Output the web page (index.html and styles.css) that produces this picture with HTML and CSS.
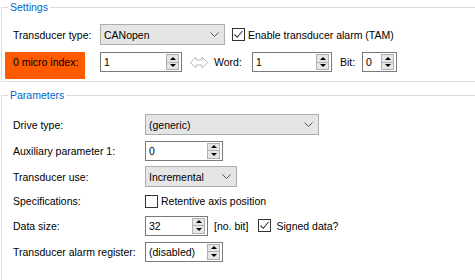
FILE: index.html
```html
<!DOCTYPE html>
<html>
<head>
<meta charset="utf-8">
<title>Transducer settings</title>
<link rel="stylesheet" href="styles.css">
</head>
<body>
<fieldset class="group settings">
  <legend>Settings</legend>
  <div class="row row-type">
    <span class="lbl-type">Transducer type:</span>
    <div class="combo w-can"><span class="combo-val">CANopen</span><svg class="chev" width="9" height="5" viewBox="0 0 9 5"><polyline points="0.5,0.5 4.5,4.5 8.5,0.5" fill="none" stroke="#555" stroke-width="1"/></svg></div>
    <span class="check chk-tam"><span class="box"><svg width="11" height="11" viewBox="0 0 11 11"><polyline points="1.5,5.5 4.2,8.3 9.5,2" fill="none" stroke="#333" stroke-width="1.1"/></svg></span><span class="check-txt">Enable transducer alarm (TAM)</span></span>
  </div>
  <div class="row row-index">
    <span class="alert">0 micro index:</span>
    <div class="spin w-idx"><span class="spin-val">1</span><span class="spin-btns"><span class="up"></span><span class="down"></span></span></div>
    <svg class="link" width="18" height="13" viewBox="0 0 18 13"><polygon points="0.5,6.5 6,1 6,4 12,4 12,1 17.5,6.5 12,12 12,9 6,9 6,12" fill="#fff" stroke="#b9b9b9" stroke-width="1" stroke-linejoin="miter"/></svg>
    <span class="txt t-word">Word:</span>
    <div class="spin w-word"><span class="spin-val">1</span><span class="spin-btns"><span class="up"></span><span class="down"></span></span></div>
    <span class="txt t-bit">Bit:</span>
    <div class="spin w-bit"><span class="spin-val">0</span><span class="spin-btns"><span class="up"></span><span class="down"></span></span></div>
  </div>
</fieldset>
<fieldset class="group params">
  <legend>Parameters</legend>
  <div class="form">
    <span class="lbl">Drive type:</span>
    <div class="cell"><div class="combo w-drive"><span class="combo-val">(generic)</span><svg class="chev" width="9" height="5" viewBox="0 0 9 5"><polyline points="0.5,0.5 4.5,4.5 8.5,0.5" fill="none" stroke="#555" stroke-width="1"/></svg></div></div>

    <span class="lbl">Auxiliary parameter 1:</span>
    <div class="cell"><div class="spin w-aux"><span class="spin-val">0</span><span class="spin-btns"><span class="up"></span><span class="down"></span></span></div></div>

    <span class="lbl">Transducer use:</span>
    <div class="cell"><div class="combo w-use"><span class="combo-val">Incremental</span><svg class="chev" width="9" height="5" viewBox="0 0 9 5"><polyline points="0.5,0.5 4.5,4.5 8.5,0.5" fill="none" stroke="#555" stroke-width="1"/></svg></div></div>

    <span class="lbl">Specifications:</span>
    <div class="cell"><span class="check"><span class="box"></span><span class="check-txt">Retentive axis position</span></span></div>

    <span class="lbl">Data size:</span>
    <div class="cell">
      <div class="spin w-size"><span class="spin-val">32</span><span class="spin-btns"><span class="up"></span><span class="down"></span></span></div>
      <span class="txt t-unit">[no. bit]</span>
      <span class="check chk-signed"><span class="box"><svg width="11" height="11" viewBox="0 0 11 11"><polyline points="1.5,5.5 4.2,8.3 9.5,2" fill="none" stroke="#333" stroke-width="1.1"/></svg></span><span class="check-txt">Signed data?</span></span>
    </div>

    <span class="lbl">Transducer alarm register:</span>
    <div class="cell"><div class="spin w-alarm"><span class="spin-val">(disabled)</span><span class="spin-btns"><span class="up"></span><span class="down"></span></span></div></div>
  </div>
</fieldset>
</body>
</html>
```

FILE: styles.css
```css
html, body {
  margin: 0;
  padding: 0;
  background: #fff;
}
body {
  width: 475px;
  height: 280px;
  overflow: hidden;
  font-family: "Liberation Sans", Arial, sans-serif;
  font-size: 10.5px;
  color: #000;
}

/* group boxes (right edge runs off the visible area) */
.group {
  box-sizing: border-box;
  width: 474px;
  min-width: 0;
  margin: 0 0 0 1px;
  border: 1px solid #dcdcdc;
  border-right: none;
  padding: 10px 0 2px 3px;
}
.group legend {
  margin-left: 3px;
  padding: 0 2px;
  line-height: 14px;
  color: #0066cc;
}
.params {
  margin-top: 6px;
  padding: 12px 0 0 3px;
  height: 192px;
  border-bottom: none;
}

/* rows */
.row {
  display: flex;
}
.row-type {
  height: 21px;
  align-items: center;
}
.lbl-type {
  width: 95px;
  box-sizing: border-box;
  padding-left: 8px;
}
.row-index {
  margin-top: 7px;
  align-items: flex-start;
}
.alert {
  box-sizing: border-box;
  width: 80px;
  height: 27px;
  padding-left: 8px;
  line-height: 20px;
  background: #ff5a00;
  margin-right: 15px;
}
.txt {
  line-height: 20px;
  white-space: nowrap;
}
.link {
  margin: 4px 0 0 8px;
}
.t-word { margin-left: 6px; width: 38px; }
.t-bit { margin-left: 8px; width: 22px; }

/* combo box */
.combo {
  box-sizing: border-box;
  height: 21px;
  display: flex;
  align-items: center;
  border: 1px solid #adadad;
  background: #e5e5e5;
  padding-left: 3px;
}
.combo .chev {
  margin-left: auto;
  margin-right: 5px;
}
.w-can { width: 125px; }
.w-drive { width: 174px; }
.w-use { width: 92px; }

/* spin box */
.spin {
  box-sizing: border-box;
  height: 20px;
  display: flex;
  border: 1px solid #7a7a7a;
  background: #fff;
}
.spin-val {
  flex: 1;
  padding-left: 3px;
  line-height: 18px;
  white-space: nowrap;
  overflow: hidden;
}
.spin-btns {
  box-sizing: border-box;
  width: 13px;
  margin: 1px 2px 1px 0;
  border: 1px solid #b0b0b0;
  background: #e6e6e6;
  display: flex;
  flex-direction: column;
}
.spin-btns .up,
.spin-btns .down {
  flex: 1;
  display: flex;
  align-items: center;
  justify-content: center;
}
.spin-btns .down {
  border-top: 1px solid #b0b0b0;
}
.spin-btns .up::after {
  content: "";
  border-left: 3px solid transparent;
  border-right: 3px solid transparent;
  border-bottom: 3px solid #000;
}
.spin-btns .down::after {
  content: "";
  border-left: 3px solid transparent;
  border-right: 3px solid transparent;
  border-top: 3px solid #000;
}
.w-idx { width: 82px; }
.w-word { width: 80px; }
.w-bit { width: 35px; }
.w-aux { width: 78px; }
.w-size { width: 63px; }
.w-alarm { width: 78px; }

/* checkbox */
.check {
  display: inline-flex;
  align-items: center;
  white-space: nowrap;
}
.box {
  box-sizing: border-box;
  width: 13px;
  height: 13px;
  border: 1px solid #333;
  background: #fff;
  display: flex;
}
.check-txt {
  margin-left: 3px;
}
.chk-tam { margin-left: 7px; }
.chk-signed { margin-left: 10px; }
.chk-signed .check-txt { margin-left: 5px; }

/* parameters form */
.form {
  margin-left: 8px;
  display: grid;
  grid-template-columns: 132px auto;
  grid-template-rows: 21px 21px 21px 18px 21px 21px;
  row-gap: 5px;
  align-items: center;
}
.lbl {
  white-space: nowrap;
}
.cell {
  display: flex;
  align-items: center;
}
.t-unit {
  margin-left: 6px;
}
```
